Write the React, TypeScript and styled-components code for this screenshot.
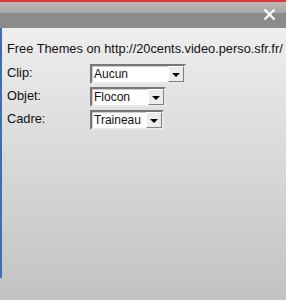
import React from 'react';
import styled, { createGlobalStyle } from 'styled-components';

const GlobalStyle = createGlobalStyle`
  html, body {
    margin: 0;
    padding: 0;
    background: #c4c4c4;
  }
  body {
    font-family: "Liberation Sans", Arial, sans-serif;
  }
`;

const Window = styled.div`
  width: 286px;
  height: 300px;
  display: flex;
  flex-direction: column;
  overflow: hidden;
`;

const TitleBar = styled.div`
  height: 28px;
  display: flex;
  flex-direction: column;
  border-top: 2px solid #d93a3a;
  box-sizing: border-box;
`;

const TitleShine = styled.div`
  height: 11px;
  background: linear-gradient(#c2b6b6, #a9a6a6);
`;

const TitleMain = styled.div`
  flex: 1;
  background: #8b8b8b;
  position: relative;
`;

const CloseButton = styled.button`
  position: absolute;
  right: 10px;
  top: -5px;
  width: 13px;
  height: 13px;
  padding: 0;
  border: none;
  background: none;
  cursor: pointer;
  display: flex;
`;

const Body = styled.div`
  flex: 1;
  display: flex;
  background: linear-gradient(#eeeeee 0%, #d8d8d8 50%, #c2c2c2 100%);
`;

const Edge = styled.div`
  width: 2px;
  display: flex;
  flex-direction: column;
`;

const EdgeBlue = styled.div`
  height: 250px;
  background: #3f6fa6;
`;

const Content = styled.div`
  flex: 1;
  padding: 13px 0 0 5px;
  font-size: 12.8px;
  line-height: 15px;
  color: #111;
`;

const Heading = styled.div`
  white-space: nowrap;
  margin-bottom: 8px;
`;

const Form = styled.div`
  display: grid;
  grid-template-columns: 83px auto;
  row-gap: 3px;
  justify-items: start;
`;

const Label = styled.div`
  padding-top: 1px;
`;

const SelectBox = styled.div<{ $w: number }>`
  width: ${p => p.$w}px;
  height: 20px;
  box-sizing: border-box;
  display: flex;
  background: #fff;
  border: 2px solid;
  border-color: #777 #e8e8e8 #e8e8e8 #777;
  box-shadow: inset 1px 1px 0 #ccc;
`;

const SelectText = styled.div`
  flex: 1;
  min-width: 0;
  overflow: hidden;
  white-space: nowrap;
  padding: 1px 0 0 2px;
  font-size: 12px;
  line-height: 15px;
`;

const SelectButton = styled.div`
  width: 16px;
  flex: none;
  box-sizing: border-box;
  background: #ececec;
  border: 1px solid;
  border-color: #fff #808080 #808080 #fff;
  display: flex;
  align-items: center;
  justify-content: center;
`;

const Arrow = styled.div`
  width: 0;
  height: 0;
  border-left: 4px solid transparent;
  border-right: 4px solid transparent;
  border-top: 4px solid #000;
  margin-top: 1px;
`;

const rows = [
  { label: 'Clip:', value: 'Aucun', w: 96 },
  { label: 'Objet:', value: 'Flocon', w: 76 },
  { label: 'Cadre:', value: 'Traineau', w: 74 },
];

export default function App() {
  return (
    <Window>
      <GlobalStyle />
      <TitleBar>
        <TitleShine />
        <TitleMain>
          <CloseButton aria-label="Fermer">
            <svg width="13" height="13" viewBox="0 0 13 13">
              <path d="M1.5 1.5 L11.5 11.5 M11.5 1.5 L1.5 11.5" stroke="#fff" strokeWidth="2.2" />
            </svg>
          </CloseButton>
        </TitleMain>
      </TitleBar>
      <Body>
        <Edge>
          <EdgeBlue />
        </Edge>
        <Content>
          <Heading>Free Themes on http://20cents.video.perso.sfr.fr/</Heading>
          <Form>
            {rows.map(r => (
              <React.Fragment key={r.label}>
                <Label>{r.label}</Label>
                <SelectBox $w={r.w}>
                  <SelectText>{r.value}</SelectText>
                  <SelectButton>
                    <Arrow />
                  </SelectButton>
                </SelectBox>
              </React.Fragment>
            ))}
          </Form>
        </Content>
      </Body>
    </Window>
  );
}
